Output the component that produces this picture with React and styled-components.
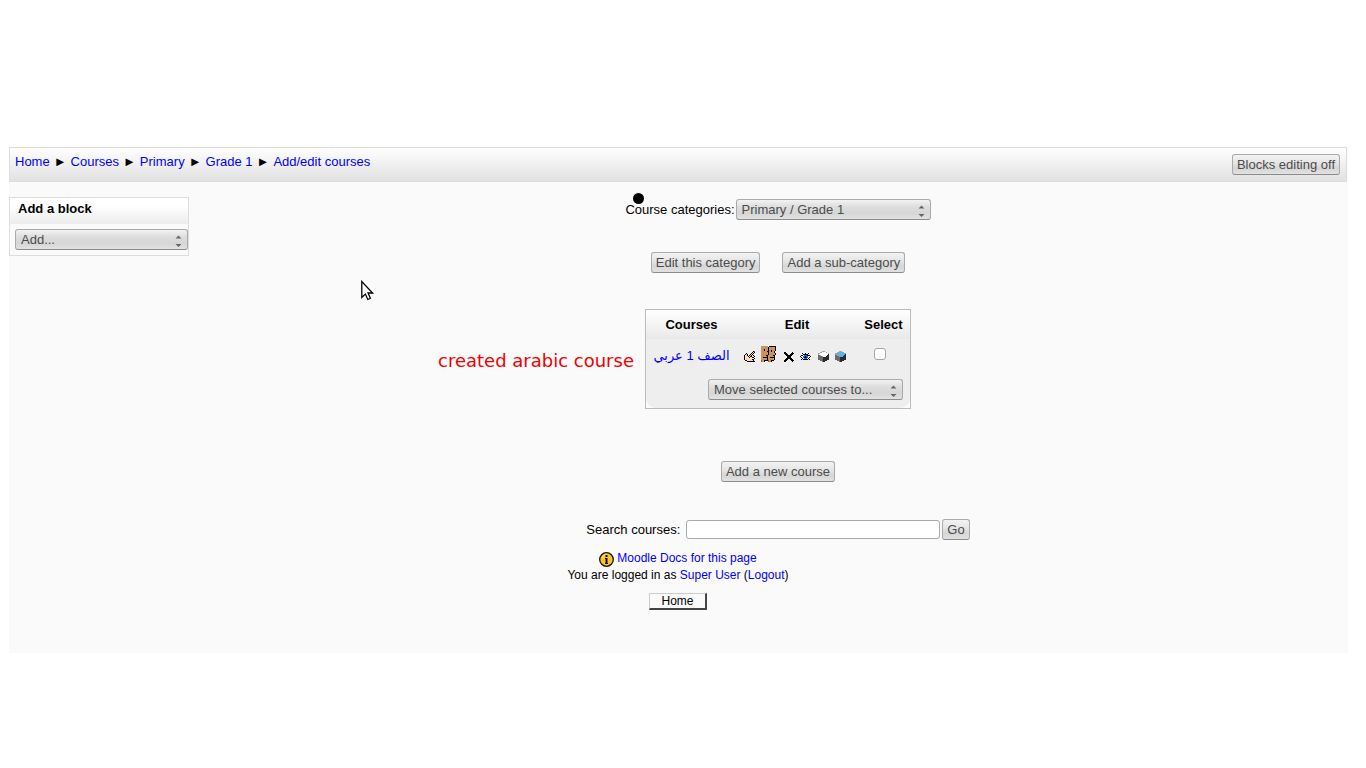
import React from 'react';
import styled, { createGlobalStyle } from 'styled-components';

const GlobalStyle = createGlobalStyle`
  body {
    margin: 0;
    background: #fff;
    color: #000;
    font-family: "Liberation Sans", Arial, "DejaVu Sans", sans-serif;
    font-size: 13px;
    line-height: 16px;
  }
`;

const Page = styled.div`
  position: relative;
  margin: 147px 18px 0 9px;
  padding: 0 1px 43px 0;
  background: #fafafa;
`;

const Link = styled.a`
  color: #0000ff;
  text-decoration: none;
`;

const NavBar = styled.div`
  display: flex;
  justify-content: space-between;
  align-items: flex-start;
  padding: 6px 6px 6px 5px;
  border: 1px solid #ddd;
  background: linear-gradient(#fff, #e1e1e1);
`;

const Trail = styled.nav`
  display: flex;
  gap: 4px;
`;

const Button = styled.button`
  height: 21px;
  padding: 0 4px;
  border: 1px solid #aaa;
  border-bottom-color: #8c8c8c;
  border-radius: 3px;
  background: linear-gradient(#f3f3f3, #e4e4e4 45%, #d6d6d6 70%, #e2e2e2);
  color: #4c4c4c;
  font: inherit;
`;

const Columns = styled.div`
  display: flex;
  align-items: flex-start;
  gap: 20px;
  margin-top: 15px;
`;

const Block = styled.aside`
  box-sizing: border-box;
  flex: 0 0 180px;
  border: 1px solid #ddd;
`;

const BlockTitle = styled.h2`
  margin: 0;
  padding: 3px 8px 7px;
  background: linear-gradient(#fff 30%, #ececec);
  font-size: 13px;
  line-height: 16px;
`;

const BlockBody = styled.div`
  padding: 5px 0 5px 5px;
`;

const SelectFrame = styled.div`
  display: grid;
  align-items: center;
  width: ${props => props.$width};

  > * {
    grid-area: 1 / 1;
  }

  svg {
    justify-self: end;
    margin-right: 6px;
    margin-top: 2px;
    pointer-events: none;
  }
`;

const StyledSelect = styled.select`
  appearance: none;
  width: 100%;
  height: 21px;
  padding: 0 20px 0 5px;
  border: 1px solid #aaa;
  border-bottom-color: #8c8c8c;
  border-radius: 3px;
  background: linear-gradient(#f3f3f3, #dedede 35%, #d6d6d6 70%, #e2e2e2);
  color: #4c4c4c;
  font: inherit;
`;

const Main = styled.main`
  display: flex;
  flex: 1;
  flex-direction: column;
  align-items: center;
  padding-top: 2px;
`;

const Row = styled.div`
  display: flex;
  align-items: center;
  gap: ${props => props.$gap || '0'};
`;

const CategoryActions = styled(Row)`
  margin: 32px 0 36px;
`;

const CourseTable = styled.table`
  box-sizing: border-box;
  width: 266px;
  margin-bottom: 52px;
  border: 1px solid #bbb;
  border-spacing: 0;
  table-layout: fixed;
  background: #fafafa;

  thead {
    background: linear-gradient(#fff, #e9e9e9);
  }
`;

const HeadCell = styled.th`
  width: ${props => props.$width};
  height: 29px;
  padding: 0;
`;

const Cell = styled.td`
  height: ${props => (props.$raised ? '30px' : '33px')};
  padding: ${props => (props.$raised ? '0 7px 3px' : '0')};
  background: #eee;
  text-align: center;
`;

const MoveCell = styled.td`
  padding: 7px 7px 8px;
  border-radius: 0 0 10px 10px;
  background: #eee;
`;

const MoveRow = styled(Row)`
  justify-content: flex-end;
`;

const EditIcons = styled.div`
  display: flex;
  align-items: flex-end;
  gap: 6px;
`;

const IconLink = styled.a`
  display: flex;
`;

const CheckBox = styled.input`
  appearance: none;
  box-sizing: border-box;
  display: block;
  width: 12px;
  height: 12px;
  margin: 0 16px 0 10px;
  border: 1px solid #a6a6a6;
  border-radius: 3px;
  background: #fff;
`;

const SearchForm = styled.form`
  display: flex;
  align-items: center;
  gap: 2px;
  margin-top: 37px;
`;

const SearchInput = styled.input`
  box-sizing: border-box;
  width: 254px;
  height: 19px;
  margin-left: 4px;
  border: 1px solid #aaa;
  border-radius: 3px;
  background: #fff;
  font: inherit;
`;

const Footer = styled.footer`
  display: flex;
  flex-direction: column;
  align-items: center;
  margin-top: 10px;
  font-size: 12px;
  line-height: 17px;
`;

const HomeLink = styled(Link)`
  box-sizing: border-box;
  width: 58px;
  height: 17px;
  margin-top: 9px;
  border: 1px solid #ccc;
  border-right: 2px solid #444;
  border-bottom: 2px solid #444;
  color: #000;
  line-height: 14px;
  text-align: center;
`;

const Note = styled.div`
  position: absolute;
  left: 429px;
  top: 203px;
  color: #f00000;
  font: 18px/22px "DejaVu Sans", sans-serif;
`;

const Dot = styled.div`
  position: absolute;
  left: 624px;
  top: 46px;
  width: 11px;
  height: 11px;
  border-radius: 50%;
  background: #000;
`;

const Pointer = styled.svg`
  position: absolute;
  left: 352px;
  top: 133px;
`;

const colours = {
  k: '#000',
  w: '#fff',
  p: '#fadcb4',
  y: '#ffe040',
  m: '#a050b0',
  b: '#c8925f',
  d: '#8a5a34',
  u: '#1b6cf0',
  n: '#0a1a80',
  g: '#6a6a6a',
  s: '#2b2b2b',
  l: '#a4a4a4',
  c: '#55b4ee',
};

const hand = [
  '.........km',
  '........kyk',
  '..k....kyk.',
  '.kpk..kyk..',
  'kppk.kyk.k.',
  'kpppkykkppk',
  'kppppkppkk.',
  'kpppppppppk',
  'kpppppppkk.',
  '.kkppppppk.',
  '...kkkkkkkk',
];

const faces = [
  'bbbbbbb.kkkkkkk',
  'bbbbbbbkbbbbbbk',
  'bbbbbbbkbbbbbbk',
  'bbbkbbbkbbbbbbk',
  'bbbkbbbkbbkbbbk',
  'bbbbbbkkbbkbbk.',
  'bbbbbbbkbbbbbk.',
  'bbbbbbbkbbbbbbk',
  'bbbbbbbkbbbbbbk',
  'bbbbbkkbbbbbkk.',
  'bbbbbbkbbbbbbk.',
  'bbkkkkkbbkkkkk.',
  'bbbbbbkbbbbbbk.',
  'bbbbbbkbbbbbbk.',
  'dbbkkkkdbbkkk..',
  'dbbk...dbbk....',
];

const cross = [
  '..kk......k.',
  '..kkk....kkk',
  '...kkk..kkk.',
  '....kkkkkk..',
  '.....kkkk...',
  '.....kkkk...',
  '....kkkkkk..',
  '...kkk..kkk.',
  '..kkk....kkk',
  '..kk......k.',
];

const eye = [
  '..k..k..k..',
  '...kkkkk...',
  '.kkwuuukkk.',
  'kwwuunuuwwk',
  '.kwunknuwk.',
  '..kwuuuwk..',
  '.k.kkkkk.k.',
  '...........',
  '...........',
];

const cube = top => [
  '....lll....',
  '..llttttl..',
  'llttttttttl',
  'lttttttttts',
  'gglttttttss',
  'ggggltttsss',
  'gggggssssss',
  'gggggssssss',
  'gggggssssss',
  '..gggssss..',
  '....gss....',
].map(line => `${top === 'w' ? '.' : ''}${line.replace(/t/g, top)}`);

const PixelIcon = ({ rows }) => (
  <svg width={rows[0].length} height={rows.length} shapeRendering="crispEdges">
    {rows.map((line, y) => [...line].map((c, x) => (
      colours[c] && <rect key={`${x}-${y}`} x={x} y={y} width="1" height="1" fill={colours[c]} />
    )))}
  </svg>
);

const Select = ({ id, name, value, width }) => (
  <SelectFrame $width={width}>
    <StyledSelect id={id} aria-label={name}>
      <option>{value}</option>
    </StyledSelect>
    <svg width="7" height="12" fill="#666">
      <path d="M.5 3.5 3.5.5l3 3zM.5 9h6l-3 3z" />
    </svg>
  </SelectFrame>
);

const InfoIcon = () => (
  <svg width="15" height="17" viewBox="0 0 15 17">
    <circle cx="7.5" cy="9.5" r="6.8" fill="#fcc42c" stroke="#111" strokeWidth="1.3" />
    <path d="M3 8a5 5 0 0 1 5-3.6" fill="none" stroke="#ffe68a" />
    <path d="M6.5 5h2v2h-2zM6 8h2.5v5H9v1H6v-1h.5V9H6z" fill="#111" />
  </svg>
);

const trail = ['Home', 'Courses', 'Primary', 'Grade 1', 'Add/edit courses'];

const actions = [
  { name: 'Edit', rows: hand },
  { name: 'Assign roles', rows: faces },
  { name: 'Delete', rows: cross },
  { name: 'Hide', rows: eye },
  { name: 'Backup', rows: cube('w') },
  { name: 'Restore', rows: cube('c') },
];

const Courses = () => (
  <CourseTable>
    <thead>
      <tr>
        <HeadCell $width="91px">Courses</HeadCell>
        <HeadCell $width="120px">Edit</HeadCell>
        <HeadCell $width="53px">Select</HeadCell>
      </tr>
    </thead>
    <tbody>
      <tr>
        <Cell><Link href="#" dir="rtl" lang="ar">الصف 1 عربي</Link></Cell>
        <Cell $raised>
          <EditIcons>
            {actions.map(action => (
              <IconLink key={action.name} href="#" aria-label={action.name}>
                <PixelIcon rows={action.rows} />
              </IconLink>
            ))}
          </EditIcons>
        </Cell>
        <Cell $raised>
          <CheckBox type="checkbox" aria-label="Select course" />
        </Cell>
      </tr>
    </tbody>
    <tfoot>
      <tr>
        <MoveCell colSpan="3">
          <MoveRow>
            <Select width="195px" name="Move selected courses" value="Move selected courses to..." />
          </MoveRow>
        </MoveCell>
      </tr>
    </tfoot>
  </CourseTable>
);

const App = () => (
  <>
    <GlobalStyle />
    <Page>
      <NavBar>
        <Trail>
          {trail.map((name, i) => (
            <React.Fragment key={name}>
              {i > 0 && <span>►</span>}
              <Link href="#">{name}</Link>
            </React.Fragment>
          ))}
        </Trail>
        <Button>Blocks editing off</Button>
      </NavBar>
      <Columns>
        <Block>
          <BlockTitle>Add a block</BlockTitle>
          <BlockBody>
            <Select width="100%" name="Add a block" value="Add..." />
          </BlockBody>
        </Block>
        <Main>
          <Row $gap="1px">
            <label htmlFor="category">Course categories:</label>
            <Select width="195px" id="category" value="Primary / Grade 1" />
          </Row>
          <CategoryActions $gap="22px">
            <Button>Edit this category</Button>
            <Button>Add a sub-category</Button>
          </CategoryActions>
          <Courses />
          <Button>Add a new course</Button>
          <SearchForm>
            <label htmlFor="search">Search courses:</label>
            <SearchInput id="search" />
            <Button type="button">Go</Button>
          </SearchForm>
        </Main>
      </Columns>
      <Footer>
        <Row $gap="3px">
          <InfoIcon />
          <Link href="#">Moodle Docs for this page</Link>
        </Row>
        <div>You are logged in as <Link href="#">Super User</Link> (<Link href="#">Logout</Link>)</div>
        <HomeLink href="#">Home</HomeLink>
      </Footer>
      <Note>created arabic course</Note>
      <Dot />
      <Pointer width="14" height="21" viewBox="0 0 14 21">
        <path d="M.8 1.5v16l3.6-3.4 2.4 5.4 2.6-1.2L7 13h4.6z" fill="#fff" stroke="#000" strokeWidth="1.3" />
      </Pointer>
    </Page>
  </>
);

export default App;
